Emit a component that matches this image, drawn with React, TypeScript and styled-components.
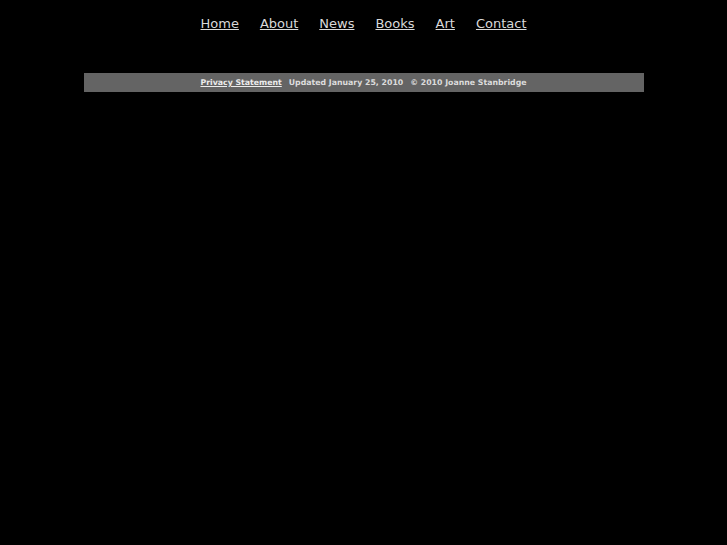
import styled, { createGlobalStyle } from "styled-components";

const GlobalStyle = createGlobalStyle`
  html, body {
    margin: 0;
    padding: 0;
    background: #000;
    height: 100%;
  }
  body {
    font-family: "DejaVu Sans", Verdana, sans-serif;
  }
`;

const Page = styled.div`
  width: 560px;
  margin: 0 auto;
  padding-top: 15px;
`;

const Nav = styled.nav`
  display: flex;
  justify-content: center;
  gap: 21px;
  height: 58px;
`;

const NavLink = styled.a`
  color: #d9d9d9;
  font-size: 13px;
  line-height: 17px;
  text-decoration: underline;
  cursor: pointer;
`;

const Footer = styled.div`
  height: 19px;
  background: #646464;
  display: flex;
  align-items: center;
  justify-content: center;
  gap: 7px;
  font-size: 7.8px;
  font-weight: bold;
  color: #dcdcdc;
  white-space: pre;
`;

const FooterLink = styled.a`
  color: #ececec;
  text-decoration: underline;
`;

const links = ["Home", "About", "News", "Books", "Art", "Contact"];

const App = () => {
  return (
    <>
      <GlobalStyle />
      <Page>
        <Nav>
          {links.map((l) => (
            <NavLink key={l}>{l}</NavLink>
          ))}
        </Nav>
        <Footer>
          <FooterLink>Privacy Statement</FooterLink>
          <span>Updated January 25, 2010</span>
          <span>© 2010 Joanne Stanbridge</span>
        </Footer>
      </Page>
    </>
  );
};

export default App;
